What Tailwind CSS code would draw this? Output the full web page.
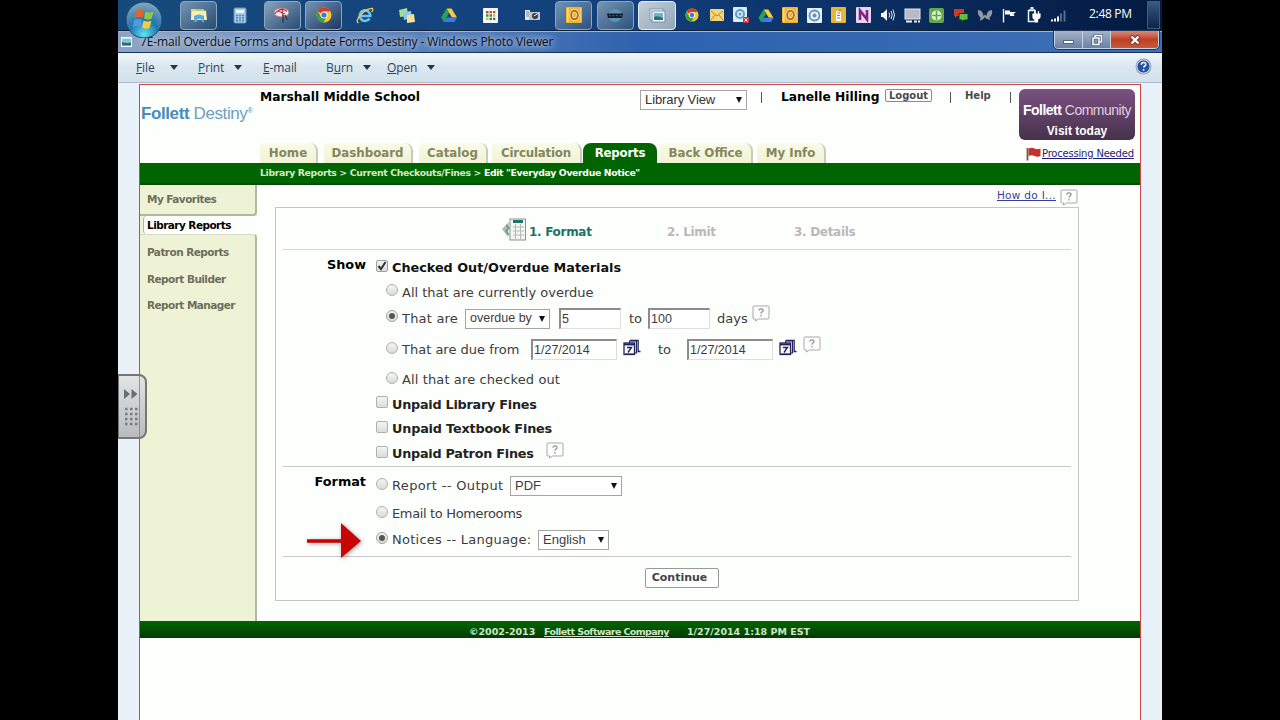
<!DOCTYPE html>
<html lang="en">
<head>
    <meta charset="UTF-8">
    <meta name="viewport" content="width=device-width, initial-scale=1.0">
    <title>7E-mail Overdue Forms and Update Forms Destiny - Windows Photo Viewer</title>
    <script src="https://cdn.jsdelivr.net/npm/@tailwindcss/browser@4"></script>
</head>
<body class="bg-black overflow-hidden">
    <!-- Shared icons -->
    <svg class="hidden">
        <symbol id="chrome" viewBox="0 0 16 16">
            <circle cx="8" cy="8" r="7.5" fill="#f6c928"/>
            <path d="M8 8 1.5 4.2A7.5 7.5 0 0 1 14.6 4.6L8 4.6z" fill="#d93a2b"/>
            <path d="M1.5 4.2A7.5 7.5 0 0 0 7.4 15.5L10.8 9.6 5 9.8z" fill="#3c9d48"/>
            <circle cx="8" cy="8" r="3.5" fill="#fff"/>
            <circle cx="8" cy="8" r="2.6" fill="#3b78d8"/>
        </symbol>
        <symbol id="drive" viewBox="0 0 16 16">
            <path d="M5.5 1.5h5L16 10.5h-5z" fill="#f6cd3a"/>
            <path d="M5.5 1.5 8 6 2.7 15 0 10.5z" fill="#2ba05a"/>
            <path d="M5.4 10.5H16L13.4 15H2.7z" fill="#3f7be0"/>
        </symbol>
        <symbol id="outlook" viewBox="0 0 16 16">
            <rect width="16" height="16" rx="1" fill="#f0b429"/>
            <rect x="1" y="1" width="14" height="14" fill="#fbe08a"/>
            <rect x="2.5" y="1" width="12" height="14" fill="#f3b52e"/>
            <ellipse cx="8.5" cy="8" rx="3.3" ry="4.3" fill="none" stroke="#fff7d8" stroke-width="3.2"/>
            <ellipse cx="8.5" cy="8" rx="3.3" ry="4.3" fill="none" stroke="#b86a08" stroke-width="2"/>
        </symbol>
        <symbol id="help" viewBox="0 0 18 17">
            <path d="M2 1h14q1 0 1 1v11q0 1-1 1H6.500L3.500 16V14H2q-1 0-1-1V2q0-1 1-1z" fill="#fdfdfd" stroke="#a9a9a9"/>
            <path d="M6.8 5.6q.2-1.800 2.200-1.800t2.100 1.600q0 1-1.200 1.700-.9.600-.9 1.700M9 10v1.500" fill="none" stroke="#8f8f8f" stroke-width="1.2"/>
        </symbol>
        <symbol id="calendar" viewBox="0 0 18 17">
            <path d="M7 1.500h8v11h2.500M8 3.500h5.500" fill="none" stroke="#23235c" stroke-width="1.600"/>
            <rect x="6.500" y="2" width="7" height="12" fill="#d9d9ee" stroke="#23235c"/>
            <path d="M14.500 2v11" stroke="#8a8ab8"/>
            <rect x="1" y="4" width="10.500" height="11.500" fill="#fff" stroke="#23235c" stroke-width="1.300"/>
            <path d="M1 5.400h10.500" stroke="#23235c" stroke-width="2"/>
            <path d="M4 8.500h4.500L5 13.500" fill="none" stroke="#23235c" stroke-width="1.400"/>
            <path d="M2 14.500h9" stroke="#6b6bc0"/>
        </symbol>
    </svg>

    <div class="relative w-[1044px] h-[720px] ml-[118px] flex flex-col bg-[#e9f2f8] overflow-hidden">

        <!-- Taskbar -->
        <div class="h-[30px] shrink-0 flex items-center bg-linear-to-r from-[#174a7c] via-[#123f7d] to-[#041a40] font-['Open_Sans','Noto_Sans',sans-serif]">
            <div class="w-[60px] shrink-0"></div>
            <div class="w-[500px] h-full shrink-0 grid grid-cols-12 justify-items-center items-center">
                <div class="w-[37px] h-[29px] flex items-center justify-center rounded-sm border border-[#8ba6c0] bg-linear-to-br from-[#7795b1] to-[#274c74]">
                    <svg class="w-[18px] h-[16px]" viewBox="0 0 18 16"><path d="M1 2h6l1 1.500h8V13H1z" fill="#e6cd6e"/><path d="M2 4h14l1 9H1z" fill="#f8eeaf"/><path d="M4 9q5-3 10 0v6h-2v-3H7v3H4z" fill="#5ba9dd"/><path d="M6 2h8v2H6z" fill="#9fcf80"/></svg>
                </div>
                <svg class="w-[14px] h-[17px]" viewBox="0 0 14 17"><rect x="1" y="1" width="12" height="15" rx="1" fill="#a9cde8" stroke="#5f95bd"/><rect x="3" y="3" width="8" height="3" fill="#eef8ff"/><path d="M3 8.500h2m1 0h2m1 0h2M3 11h2m1 0h2m1 0h2M3 13.500h2m1 0h2m1 0h2" stroke="#4c83b4" stroke-width="1.500"/></svg>
                <div class="w-[37px] h-[29px] flex items-center justify-center rounded-sm border border-[#8ba6c0] bg-linear-to-br from-[#8ba3bd] to-[#274c74]">
                    <svg class="w-[18px] h-[17px]" viewBox="0 0 18 17"><ellipse cx="8.500" cy="5.500" rx="7.500" ry="4.500" fill="#f5eeee" stroke="#b76b70"/><path d="M2 6.500q6-7 12-2M9 1l1 8M5 4l7 3" stroke="#b8343c" stroke-width="1.200" fill="none"/><path d="M10 8v8M12 8l2 5" stroke="#2b4157" stroke-width="1.500"/></svg>
                </div>
                <div class="w-[37px] h-[29px] flex items-center justify-center rounded-sm border border-[#8ba6c0] bg-linear-to-br from-[#7795b1] to-[#1c3764]">
                    <svg class="w-[16px] h-[16px]"><use href="#chrome"/></svg>
                </div>
                <svg class="w-[18px] h-[17px]" viewBox="0 0 18 17"><path d="M13.500 11.500A5.300 5.300 0 1 1 14.300 9H5" fill="none" stroke="#6cc3f2" stroke-width="2.600"/><path d="M2.500 16Q-1 14 5 7.500T16.500 1.500q1 1-.8 3.500" fill="none" stroke="#f0c544" stroke-width="1.400"/></svg>
                <svg class="w-[18px] h-[17px]" viewBox="0 0 18 17"><path d="m1 3 8-2 1 8-8 1z" fill="#a9dc8c"/><path d="m5 5 8-1 1 7-8 2z" fill="#8cc8ee"/><path d="m9 8 7-1 1 8-8 1z" fill="#f3e18b"/></svg>
                <svg class="w-[18px] h-[16px]"><use href="#drive"/></svg>
                <svg class="w-[15px] h-[15px]" viewBox="0 0 15 15"><rect width="15" height="15" rx="1" fill="#f7f7f2"/><path d="M3 4.200h2.500" stroke="#d33b30" stroke-width="2.300"/><path d="M6.500 4.200H9M10 4.200h2.300" stroke="#d7473f" stroke-width="2.300"/><path d="M3 7.500h2.500M6.500 7.500H9" stroke="#339a4f" stroke-width="2.300"/><path d="M10 7.500h2.300M3 10.800h2.500" stroke="#e8b029" stroke-width="2.300"/><path d="M6.500 10.800H9M10 10.800h2.300" stroke="#3469bd" stroke-width="2.300"/></svg>
                <svg class="w-[17px] h-[12px]" viewBox="0 0 17 12"><path d="M1 1h5v10H1z" fill="#e5e8ea"/><path d="M5 3h11v8H5z" fill="#bfc6cb"/><path d="M2 3h3M2 5h3M2 7h3" stroke="#7a858e"/><circle cx="11" cy="7" r="3" fill="#333d49"/><path d="m10 7 3-2" stroke="#fff"/></svg>
                <div class="w-[37px] h-[29px] flex items-center justify-center rounded-sm border border-[#8ba6c0] bg-linear-to-br from-[#6e92b5] to-[#2d527e]">
                    <svg class="w-[16px] h-[16px]"><use href="#outlook"/></svg>
                </div>
                <div class="w-[37px] h-[29px] flex items-center justify-center rounded-sm border border-[#8ba6c0] bg-linear-to-br from-[#7795b1] to-[#2b5380]">
                    <svg class="w-[18px] h-[15px]" viewBox="0 0 18 15"><ellipse cx="9" cy="7.500" rx="7" ry="6.500" fill="#5f93b8"/><path d="M1 5.500h16l-1 4.500H2z" fill="#101c28"/><path d="M3 7.700h2m1.500 0h2m1.500 0h2m1.500 0h2" stroke="#49657c"/></svg>
                </div>
                <div class="w-[38px] h-[29px] flex items-center justify-center rounded-sm border border-[#e6edf2] bg-linear-to-br from-[#c4ced6] to-[#92a7ba]">
                    <svg class="w-[17px] h-[15px]" viewBox="0 0 17 15"><rect x="1" y="1" width="13" height="11" fill="#fff" stroke="#8197a9"/><rect x="3" y="3" width="13" height="11" fill="#eef6fb" stroke="#7590a5"/><path d="M5 5h9v7H5z" fill="#6bb3d6"/><path d="M5 12V9q3-2 9 1v2z" fill="#2d7068"/></svg>
                </div>
            </div>
            <!-- Notification area -->
            <div class="w-[391px] ml-[2px] shrink-0 grid grid-cols-16 justify-items-center items-center">
                <svg class="w-[14px] h-[14px]"><use href="#chrome"/></svg>
                <svg class="w-[14px] h-[12px]" viewBox="0 0 14 12"><rect width="14" height="12" rx="1" fill="#f4d679"/><path d="m1 2 6 5 6-5M1 11l4-5M13 11 9 6" fill="none" stroke="#b98924"/></svg>
                <svg class="w-[16px] h-[16px]" viewBox="0 0 16 16"><rect width="14" height="15" rx="1" fill="#dcecf5"/><circle cx="7" cy="7" r="4" fill="none" stroke="#5f9dc5" stroke-width="2"/><circle cx="7" cy="7" r="1.500" fill="#5f9dc5"/><rect x="10" y="10" width="6" height="6" rx="1" fill="#d0343c"/><path d="m11.500 11.500 3 3m0-3-3 3" stroke="#fff"/></svg>
                <svg class="w-[16px] h-[15px]"><use href="#drive"/></svg>
                <svg class="w-[16px] h-[16px]"><use href="#outlook"/></svg>
                <svg class="w-[15px] h-[15px]" viewBox="0 0 15 15"><rect width="15" height="15" rx="1" fill="#e8f1f6"/><circle cx="7.500" cy="7.500" r="5" fill="none" stroke="#5d95b9" stroke-width="1.800"/><circle cx="7.500" cy="7.500" r="2" fill="#5d95b9"/></svg>
                <svg class="w-[15px] h-[16px]" viewBox="0 0 15 16"><rect width="15" height="16" rx="1" fill="#e8b63a"/><path d="M5 4h5v10H5z" fill="#fff"/><path d="M9 2v3M6 6h3M6 8.500h3M6 11h3" stroke="#b37d10"/></svg>
                <svg class="w-[15px] h-[16px]" viewBox="0 0 15 16"><rect width="15" height="16" rx="1" fill="#ead5ee"/><path d="M4 13V3.500L11 12.500V3" fill="none" stroke="#7a2285" stroke-width="2.500"/></svg>
                <svg class="w-[15px] h-[14px]" viewBox="0 0 15 14"><path d="M1 5h2l4-4v12L3 9H1z" fill="#f5f7f9"/><path d="M9 4.500q1.500 2.500 0 5M11 3q2.500 4 0 8M13 1.500q3 5.500 0 11" fill="none" stroke="#dfe8ef"/></svg>
                <svg class="w-[17px] h-[15px]" viewBox="0 0 17 15"><rect x="1" y="1" width="15" height="10" fill="#b7bac9" stroke="#e4e5ea"/><path d="M2 13.500h6M10 13.500h3M14 13.500h2" stroke="#f1f1f1" stroke-width="2"/></svg>
                <svg class="w-[15px] h-[15px]" viewBox="0 0 15 15"><rect width="15" height="15" rx="2" fill="#62a84a"/><circle cx="7.500" cy="7.500" r="5" fill="#eaf5e1"/><path d="M7.500 3v9M3 7.500h9" stroke="#62a84a" stroke-width="1.700"/></svg>
                <svg class="w-[16px] h-[15px]" viewBox="0 0 16 15"><path d="M1 1h10v7H4L2 10V8H1z" fill="#cf3a22"/><path d="M6 5.500h9V12h-4l-2 2.500V12H6z" fill="#5cc04a" stroke="#16301c"/></svg>
                <svg class="w-[16px] h-[13px]" viewBox="0 0 16 13"><path d="M1 1q5 0 5.500 6L8 5.500 9.500 7Q10 1 15 1q1 5-2.500 7.500L13 11 9 9.500 8 8 7 9.500 3 12 3.500 8.500Q0 6 1 1z" fill="#929a9f"/></svg>
                <svg class="w-[15px] h-[15px]" viewBox="0 0 15 15"><path d="M1.500 1v13.500" stroke="#f5f7f9" stroke-width="1.400"/><path d="M3 2.500h5v1.500h6L11.500 6l1 2H8V6.500H3z" fill="#f5f7f9"/></svg>
                <svg class="w-[14px] h-[16px]" viewBox="0 0 14 16"><path d="M2 3h6M1.500 3.500V14.500H8V3.500z" fill="none" stroke="#eef2f5" stroke-width="1.500"/><path d="M3.500 1h3" stroke="#eef2f5" stroke-width="2"/><path d="M6 7h7v3q-1 2-2.500 2V15h-2v-3Q6 12 6 10zM8 4v3M11.500 4v3" fill="#fff" stroke="#fff" stroke-width="1.200"/></svg>
                <svg class="w-[15px] h-[13px]" viewBox="0 0 15 13"><path d="M1 12.500v-2M4 12.500v-3M7 12.500v-5" stroke="#f5f7f9" stroke-width="2"/><path d="M10 12.500v-8M13.500 12.500v-11" stroke="#5b7491" stroke-width="1.800"/></svg>
            </div>
            <div class="w-[44px] ml-[18px] shrink-0 text-[12px] leading-none text-white whitespace-nowrap tracking-[-0.3px] -mt-[2px]">2:48 PM</div>
            <div class="w-[13px] h-[28px] ml-auto mr-[2px] border border-[#3f5c7c] bg-linear-to-b from-[#3a5a80] to-[#0b2447]"></div>
        </div>

        <!-- Title bar -->
        <div class="h-[23px] shrink-0 flex items-start border-t border-b border-t-[#0c2039] border-b-[#16325c] bg-linear-to-r from-[#8ea4c5] from-0% via-[#2f62ae] via-50% to-[#3d70b8] shadow-[inset_0_1px_0_#9db7d8] font-['Open_Sans','Noto_Sans',sans-serif]">
            <svg class="w-[13px] h-[12px] ml-[2px] mt-[5px]" viewBox="0 0 13 12"><rect x=".5" y=".5" width="12" height="11" fill="#f5fafc" stroke="#8fa5b6"/><path d="M2 2.500h9v7H2z" fill="#86c4e2"/><path d="M2 9.500V6q4 1.500 9 .5v3z" fill="#2c6b70"/></svg>
            <div class="ml-[7px] h-[21px] leading-[21px] text-[12px] text-[#0c1118] whitespace-nowrap tracking-[-0.12px] [text-shadow:0_0_6px_#ccd6e6,0_0_10px_#ccd6e6]">7E-mail Overdue Forms and Update Forms Destiny - Windows Photo Viewer</div>
            <div class="ml-auto mr-[3px] h-[18px] w-[105px] flex rounded-b border border-t-0 border-[#c5d2e0] outline outline-[#23375a] overflow-hidden">
                <div class="w-[28px] flex items-center justify-center border-r border-[#c5d2e0] bg-linear-to-b from-[#a5b3c8] to-[#6a82a5]"><div class="w-[11px] h-[4px] mt-[4px] bg-white border border-[#54657c]"></div></div>
                <div class="w-[28px] flex items-center justify-center border-r border-[#c5d2e0] bg-linear-to-b from-[#a5b3c8] to-[#6a82a5]">
                    <svg class="w-[12px] h-[12px]" viewBox="0 0 12 12"><path d="M4 3V1.500h6.500V8H9M2 4h6v6.500H2z" fill="none" stroke="#4f607a" stroke-width="3"/><path d="M4 3V1.500h6.500V8H9M2 4h6v6.500H2z" fill="none" stroke="#fff" stroke-width="1.500"/></svg>
                </div>
                <div class="flex-1 flex items-center justify-center bg-linear-to-b from-[#d68b78] via-[#bf3f25] to-[#c75a3a]">
                    <svg class="w-[12px] h-[10px]" viewBox="0 0 12 10"><path d="m2 1 8 8m0-8L2 9" stroke="#6e3029" stroke-width="4"/><path d="m2.500 1.500 7 7m0-7-7 7" stroke="#fff" stroke-width="2.400"/></svg>
                </div>
            </div>
        </div>

        <!-- Menu bar -->
        <div class="h-[30px] shrink-0 flex items-center pl-[18px] pr-[10px] border-b border-[#a7bccc] bg-linear-to-b from-[#eef6fa] via-[#dae7ef] to-[#d3e1ea] text-[12px] text-[#33435a] whitespace-nowrap tracking-[-0.1px] font-['Open_Sans','Noto_Sans',sans-serif]">
            <div class="w-[62px] flex items-center"><span class="w-[34px]"><u>F</u>ile</span><span class="border-x-4 border-x-transparent border-t-[5px] border-t-[#26374d]"></span></div>
            <div class="w-[65px] flex items-center"><span class="w-[36px]"><u>P</u>rint</span><span class="border-x-4 border-x-transparent border-t-[5px] border-t-[#26374d]"></span></div>
            <div class="w-[63px]"><u>E</u>-mail</div>
            <div class="w-[61px] flex items-center"><span class="w-[37px]">B<u>u</u>rn</span><span class="border-x-4 border-x-transparent border-t-[5px] border-t-[#26374d]"></span></div>
            <div class="flex items-center"><span class="w-[40px]"><u>O</u>pen</span><span class="border-x-4 border-x-transparent border-t-[5px] border-t-[#26374d]"></span></div>
            <svg class="w-[17px] h-[17px] ml-auto -mt-[3px]" viewBox="0 0 17 17"><circle cx="8.500" cy="8.500" r="8" fill="#8f9bb0"/><circle cx="8.500" cy="8.500" r="6.600" fill="#2450a8" stroke="#dbe5f2"/><path d="M6.300 6.700q0-2.200 2.300-2.200t2.200 1.900q0 1-1.100 1.600-1 .6-1 1.500M8.600 11v1.700" fill="none" stroke="#fff" stroke-width="1.500"/></svg>
        </div>

        <!-- Viewed page -->
        <div class="ml-[21px] mt-[1px] h-[640px] shrink-0 w-[1002px] border border-[#d0484c] bg-[#fdfffc] flex flex-col font-['DejaVu_Sans',sans-serif] text-[13px] text-[#3c3c3c] whitespace-nowrap">

            <!-- Header -->
            <header class="h-[78px] shrink-0 flex">
                <div class="w-[120px] pl-px pt-[16px] font-['Liberation_Sans',sans-serif] text-[17px] leading-[20px] tracking-[-0.4px] text-[#4a8bb8]"><b>Follett</b> <span class="text-[#6ba0c2]">Destiny</span><span class="text-[7px] align-[6px]">®</span></div>
                <div class="w-[759px] flex flex-col justify-between">
                    <div class="h-[30px] flex items-start pt-[4px] text-black font-bold text-[12.250px] leading-[16px]">
                        <div class="w-[380px]">Marshall Middle School</div>
                        <div class="w-[107px] h-[20px] mt-px px-[4px] flex items-center justify-between border border-[#a5a5a5] bg-white font-['Liberation_Sans',sans-serif] font-normal text-[13px] text-[#333] tracking-[-0.1px]">Library View<span class="border-x-[3.5px] border-x-transparent border-t-[6px] border-t-[#111]"></span></div>
                        <div class="w-px h-[11px] ml-[14px] mt-[3px] bg-[#555]"></div>
                        <div class="ml-[19px] w-[104px]">Lanelle Hilling</div>
                        <div class="w-[47px] h-[13px] flex items-center justify-center rounded-xs border border-[#8a8a8a] bg-white text-[10px] text-[#4a4a4a]">Logout</div>
                        <div class="w-px h-[11px] ml-[18px] mt-[3px] bg-[#555]"></div>
                        <div class="ml-[14px] w-[45px] text-[10px] text-[#4a4a4a] -mt-px">Help</div>
                        <div class="w-px h-[11px] mt-[3px] bg-[#555]"></div>
                    </div>
                    <nav class="h-[20px] flex font-bold text-[11.800px] leading-[20px] text-[#84865f] text-center">
                        <div class="w-[58px] mr-[6px] rounded-tr-lg rounded-tl-sm border-r-2 border-[#c8cbb8] bg-linear-to-b from-[#fafbe9] to-[#eff3d3]">Home</div>
                        <div class="w-[89px] mr-[6px] rounded-tr-lg rounded-tl-sm border-r-2 border-[#c8cbb8] bg-linear-to-b from-[#fafbe9] to-[#eff3d3]">Dashboard</div>
                        <div class="w-[69px] mr-[4px] rounded-tr-lg rounded-tl-sm border-r-2 border-[#c8cbb8] bg-linear-to-b from-[#fafbe9] to-[#eff3d3]">Catalog</div>
                        <div class="w-[90px] mr-px rounded-tr-lg rounded-tl-sm border-r-2 border-[#c8cbb8] bg-linear-to-b from-[#fafbe9] to-[#eff3d3] tracking-[-0.2px]">Circulation</div>
                        <div class="w-[74px] mr-[3px] rounded-t-lg bg-[#006400] text-white tracking-[-0.2px]">Reports</div>
                        <div class="w-[93px] mr-[4px] rounded-tr-lg rounded-tl-sm border-r-2 border-[#c8cbb8] bg-linear-to-b from-[#fafbe9] to-[#eff3d3]">Back Office</div>
                        <div class="w-[69px] rounded-tr-lg rounded-tl-sm border-r-2 border-[#c8cbb8] bg-linear-to-b from-[#fafbe9] to-[#eff3d3]">My Info</div>
                    </nav>
                </div>
                <div class="w-[116px] pt-[4px]">
                    <div class="h-[51px] pt-[12px] rounded-md bg-linear-to-b from-[#7c5082] to-[#46324c] text-center text-white font-['Liberation_Sans',sans-serif]">
                        <div class="text-[14px] leading-[18px] tracking-[-0.5px]"><b>Follett</b> <span class="text-[#e0cfe2]">Community</span></div>
                        <div class="text-[12px] leading-[25px] font-bold">Visit today</div>
                    </div>
                    <div class="flex pl-[7px] mt-[7px] items-center text-[10px] leading-[14px] tracking-[-0.2px] text-[#1c1c78]">
                        <svg class="w-[15px] h-[14px] mr-px" viewBox="0 0 15 14"><path d="M1.500 1v12.500" stroke="#7a5b30" stroke-width="1.800"/><path d="M2.500 1.500q3-1.500 6 0t6 0V9q-3 1.500-6 0t-6 0z" fill="#c3322e"/></svg>
                        <u>Processing Needed</u>
                    </div>
                </div>
            </header>

            <!-- Breadcrumb -->
            <div class="h-[22px] shrink-0 pl-[120px] bg-[#006400] border-b-2 border-[#0a4a08] text-[9.300px] leading-[19px] tracking-[-0.340px] font-bold text-[#d5ecc8]">Library Reports &gt; Current Checkouts/Fines &gt; <span class="text-white">Edit "Everyday Overdue Notice"</span></div>

            <div class="h-[436px] shrink-0 flex">
                <!-- Sidebar -->
                <aside class="w-[117px] flex flex-col text-[10.500px] leading-[18px] font-bold text-[#6d6e5c] bg-[#eff3d5] tracking-[-0.550px]">
                    <div class="h-[31px] pl-[7px] pt-[5px] border-r-2 border-b-2 border-[#b4b7a0] rounded-br-sm">My Favorites</div>
                    <div class="h-[18px] ml-[3px] pl-[3px] bg-[#fdfffc] rounded-l border-l border-[#b4b7a0] text-black">Library Reports</div>
                    <div class="flex-1 pl-[7px] pt-[8px] flex flex-col gap-[8.500px] border-r-2 border-t border-r-[#b4b7a0] border-t-[#d8dbc4] rounded-tr-sm">
                        <div>Patron Reports</div>
                        <div>Report Builder</div>
                        <div>Report Manager</div>
                    </div>
                </aside>

                <main class="w-[823px] pl-[18px]">
                    <div class="h-[22px] flex items-center justify-end gap-[4px] pr-[2px] text-[10.500px] tracking-[0.300px] text-[#3c3c9c]"><u>How do I...</u><svg class="w-[18px] h-[17px] mt-[2px]"><use href="#help"/></svg></div>
                    <div class="w-[804px] h-[394px] border border-[#c3c7c3] px-[7px]">
                        <!-- Wizard steps -->
                        <div class="h-[42px] flex items-center pl-[218px] pt-[7px] border-b border-[#d6d6d6] text-[12px] tracking-[-0.300px] font-bold text-[#b9b9b9]">
                            <svg class="w-[26px] h-[25px] mr-[2px] -mt-[5px]" viewBox="0 0 26 25"><rect x="9" y="2" width="15.500" height="21" fill="#f3f6f3" stroke="#8a918e"/><path d="M12 4.500h10" stroke="#1b7566" stroke-width="3"/><path d="M12 10h11M12 14h11M12 18h11M14.500 7v15M19.500 7v15" stroke="#b5bcb8"/><path d="M8 5 1 12l6 8z" fill="#a9beb4"/><path d="M5 8l3 3-3 3 3 4" fill="none" stroke="#6b9182" stroke-width="1.300"/></svg>
                            <div class="w-[138px] text-[#1c7365]">1. Format</div>
                            <div class="w-[127px]">2. Limit</div>
                            <div>3. Details</div>
                        </div>

                        <!-- Show -->
                        <div class="flex pt-[5px] h-[217px] border-b border-[#c8cbc8]">
                            <div class="w-[83px] mr-[10px] pt-[2px] text-right font-bold text-[12.800px] leading-[16px] text-black">Show</div>
                            <div>
                                <div class="h-[26px] flex items-center gap-[4px] font-bold text-[12.800px] text-[#111]">
                                    <div class="w-[12px] h-[12px] -mt-[5px] rounded-xs border border-[#a0a0a0] bg-linear-to-b from-[#f4f4f4] to-[#dcdcdc]"><svg class="w-[10px] h-[10px]" viewBox="0 0 10 10"><path d="m1.500 5 2.500 3 4.500-7" fill="none" stroke="#333" stroke-width="2"/></svg></div>
                                    Checked Out/Overdue Materials
                                </div>
                                <div class="h-[24px] flex items-center pl-[10px]">
                                    <div class="w-[12px] h-[12px] -mt-[6px] mr-[4px] rounded-full border border-[#b0b0b0] bg-linear-to-b from-[#f4f4f4] to-[#dcdcdc]"></div>All that are currently overdue
                                </div>
                                <div class="h-[28px] flex items-center pl-[10px]">
                                    <div class="w-[12px] h-[12px] -mt-[6px] mr-[4px] flex items-center justify-center rounded-full border border-[#a0a0a0] bg-linear-to-b from-[#f4f4f4] to-[#dcdcdc]"><div class="w-[6px] h-[6px] rounded-full bg-[#555]"></div></div>
                                    <div class="w-[63px] tracking-[0.200px]">That are</div>
                                    <div class="w-[85px] h-[20px] -mt-px px-[4px] flex items-center justify-between border border-[#a5a5a5] bg-white font-['Liberation_Sans',sans-serif] text-[12.500px]">overdue by<span class="border-x-[3.5px] border-x-transparent border-t-[6px] border-t-[#111]"></span></div>
                                    <div class="ml-[9px] w-[62px] h-[21px] -mt-px pl-px leading-[18px] border-t-2 border-l-2 border-r border-b border-t-[#8c8c8c] border-l-[#8c8c8c] border-r-[#dedede] border-b-[#dedede] bg-white font-['Liberation_Sans',sans-serif] text-[12.500px]">5</div>
                                    <div class="ml-[8px] w-[19px]">to</div>
                                    <div class="w-[62px] h-[21px] -mt-px pl-px leading-[18px] border-t-2 border-l-2 border-r border-b border-t-[#8c8c8c] border-l-[#8c8c8c] border-r-[#dedede] border-b-[#dedede] bg-white font-['Liberation_Sans',sans-serif] text-[12.500px]">100</div>
                                    <div class="ml-[7px] w-[35px]">days</div>
                                    <svg class="w-[18px] h-[17px] -mt-[11px]"><use href="#help"/></svg>
                                </div>
                                <div class="h-[34px] flex items-center pl-[10px]">
                                    <div class="w-[12px] h-[12px] -mt-[5px] mr-[4px] rounded-full border border-[#b0b0b0] bg-linear-to-b from-[#f4f4f4] to-[#dcdcdc]"></div>
                                    <div class="w-[129px]">That are due from</div>
                                    <div class="w-[86px] h-[21px] -mt-px pl-px leading-[18px] border-t-2 border-l-2 border-r border-b border-t-[#8c8c8c] border-l-[#8c8c8c] border-r-[#dedede] border-b-[#dedede] bg-white font-['Liberation_Sans',sans-serif] text-[12.500px]">1/27/2014</div>
                                    <svg class="w-[18px] h-[17px] ml-[6px] -mt-[6px]"><use href="#calendar"/></svg>
                                    <div class="ml-[17px] w-[29px]">to</div>
                                    <div class="w-[86px] h-[21px] -mt-px pl-px leading-[18px] border-t-2 border-l-2 border-r border-b border-t-[#8c8c8c] border-l-[#8c8c8c] border-r-[#dedede] border-b-[#dedede] bg-white font-['Liberation_Sans',sans-serif] text-[12.500px]">1/27/2014</div>
                                    <svg class="w-[18px] h-[17px] ml-[6px] -mt-[6px]"><use href="#calendar"/></svg>
                                    <svg class="w-[18px] h-[17px] ml-[6px] -mt-[11px]"><use href="#help"/></svg>
                                </div>
                                <div class="h-[26px] flex items-center pl-[10px] tracking-[0.120px]">
                                    <div class="w-[12px] h-[12px] -mt-[5px] mr-[4px] rounded-full border border-[#b0b0b0] bg-linear-to-b from-[#f4f4f4] to-[#dcdcdc]"></div>All that are checked out
                                </div>
                                <div class="h-[24px] flex items-center gap-[4px] font-bold text-[12.800px] tracking-[-0.250px] text-[#222]">
                                    <div class="w-[12px] h-[12px] -mt-[6px] rounded-xs border border-[#b0b0b0] bg-linear-to-b from-[#f4f4f4] to-[#dcdcdc]"></div>Unpaid Library Fines
                                </div>
                                <div class="h-[24px] flex items-center gap-[4px] font-bold text-[12.800px] tracking-[-0.170px] text-[#222]">
                                    <div class="w-[12px] h-[12px] -mt-[5px] rounded-xs border border-[#b0b0b0] bg-linear-to-b from-[#f4f4f4] to-[#dcdcdc]"></div>Unpaid Textbook Fines
                                </div>
                                <div class="h-[26px] flex items-center gap-[4px] font-bold text-[12.800px] tracking-[-0.250px] text-[#222]">
                                    <div class="w-[12px] h-[12px] -mt-[5px] rounded-xs border border-[#b0b0b0] bg-linear-to-b from-[#f4f4f4] to-[#dcdcdc]"></div>Unpaid Patron Fines
                                    <svg class="w-[18px] h-[17px] ml-[8px] -mt-[8px]"><use href="#help"/></svg>
                                </div>
                            </div>
                        </div>

                        <!-- Format -->
                        <div class="flex h-[90px] border-b border-[#c8cbc8]">
                            <div class="w-[83px] mr-[10px] pt-[7px] text-right font-bold text-[12.800px] leading-[16px] text-black">Format</div>
                            <div class="pt-px">
                                <div class="h-[36px] flex items-center">
                                    <div class="w-[12px] h-[12px] -mt-[5px] mr-[4px] rounded-full border border-[#b0b0b0] bg-linear-to-b from-[#f4f4f4] to-[#dcdcdc]"></div>
                                    <div class="w-[118px] tracking-[0.350px]">Report -- Output</div>
                                    <div class="w-[112px] h-[20px] -mt-px px-[4px] flex items-center justify-between border border-[#a5a5a5] bg-white font-['Liberation_Sans',sans-serif] text-[13px]">PDF<span class="border-x-[3.5px] border-x-transparent border-t-[6px] border-t-[#111]"></span></div>
                                </div>
                                <div class="h-[20px] flex items-center tracking-[-0.350px]">
                                    <div class="w-[12px] h-[12px] -mt-[5px] mr-[4px] rounded-full border border-[#b0b0b0] bg-linear-to-b from-[#f4f4f4] to-[#dcdcdc]"></div>Email to Homerooms
                                </div>
                                <div class="h-[32px] flex items-center">
                                    <div class="w-[12px] h-[12px] -mt-[5px] mr-[4px] flex items-center justify-center rounded-full border border-[#a0a0a0] bg-linear-to-b from-[#f4f4f4] to-[#dcdcdc]"><div class="w-[6px] h-[6px] rounded-full bg-[#555]"></div></div>
                                    <div class="w-[146px] tracking-[0.250px]">Notices -- Language:</div>
                                    <div class="w-[71px] h-[20px] -mt-px px-[4px] flex items-center justify-between border border-[#a5a5a5] bg-white font-['Liberation_Sans',sans-serif] text-[13px]">English<span class="border-x-[3.5px] border-x-transparent border-t-[6px] border-t-[#111]"></span></div>
                                </div>
                            </div>
                        </div>
                        <div class="pt-[11px] pl-[362px]">
                            <div class="w-[74px] h-[20px] pr-[5px] pt-px flex items-center justify-center rounded-xs border border-[#999] bg-white text-[11px] font-bold text-[#444]">Continue</div>
                        </div>
                    </div>
                </main>
            </div>

            <!-- Footer -->
            <footer class="h-[17px] shrink-0 flex pl-[329px] bg-linear-to-b from-[#006800] to-[#043a04] text-[9.500px] leading-[22px] font-bold text-[#cfe6c4]">
                <div class="w-[75px]">©2002-2013</div>
                <div class="w-[143px] tracking-[-0.600px]"><u>Follett Software Company</u></div>
                <div>1/27/2014 1:18 PM EST</div>
            </footer>
        </div>

        <!-- Start orb -->
        <svg class="absolute left-[7px] top-0 w-[40px] h-[38px]" viewBox="0 0 40 38">
            <defs><radialGradient id="orb" cx=".5" cy=".9" r=".9"><stop offset="0" stop-color="#5fe3f5"/><stop offset=".45" stop-color="#1e75ae"/><stop offset="1" stop-color="#8aa7bd"/></radialGradient></defs>
            <circle cx="19" cy="20" r="18" fill="url(#orb)" stroke="#1a4468"/>
            <path d="M11 11q4-3 8-.5L17.500 18q-4-2-8 .3z" fill="#e2632c"/>
            <path d="M20.500 11.500q4 2 8 .3L26.500 19q-4 1.500-7.500-.5z" fill="#8fc643"/>
            <path d="M9 20q4-2.500 8-.3L15.500 27q-4-2-8 .3z" fill="#4d9be0"/>
            <path d="M18.500 20.500q4 2 8 .3L24.500 28q-4 1.500-7.500-.5z" fill="#f8c93a"/>
        </svg>

        <!-- Drawer handle of the whiteboard tool -->
        <div class="absolute left-0 top-[374px] w-[29px] h-[65px] rounded-r-lg border-2 border-l border-[#777] bg-linear-to-b from-[#e2e4e5] to-[#b9bcbd]">
            <svg class="w-[26px] h-[61px]" viewBox="0 0 26 61"><path d="M5 13v10l6-5zM12.500 13v10l6-5z" fill="#6b6f72"/><path d="M6 33h14M6 38h14M6 43h14M6 48h14" stroke="#777b7e" stroke-width="2.500" stroke-dasharray="2.500 2.500"/><path d="M20.500 0v61" stroke="#d05a5e" stroke-width=".8"/></svg>
        </div>

        <!-- Arrow annotation -->
        <svg class="absolute left-[186px] top-[520px] w-[62px] h-[42px] drop-shadow-[1px_1px_2px_rgba(0,0,0,0.4)]" viewBox="0 0 62 42">
            <path d="M3 21h35" stroke="#c40000" stroke-width="3.500"/>
            <path d="M37 3v35l20-17z" fill="#c80404"/>
        </svg>
    </div>
</body>
</html>
